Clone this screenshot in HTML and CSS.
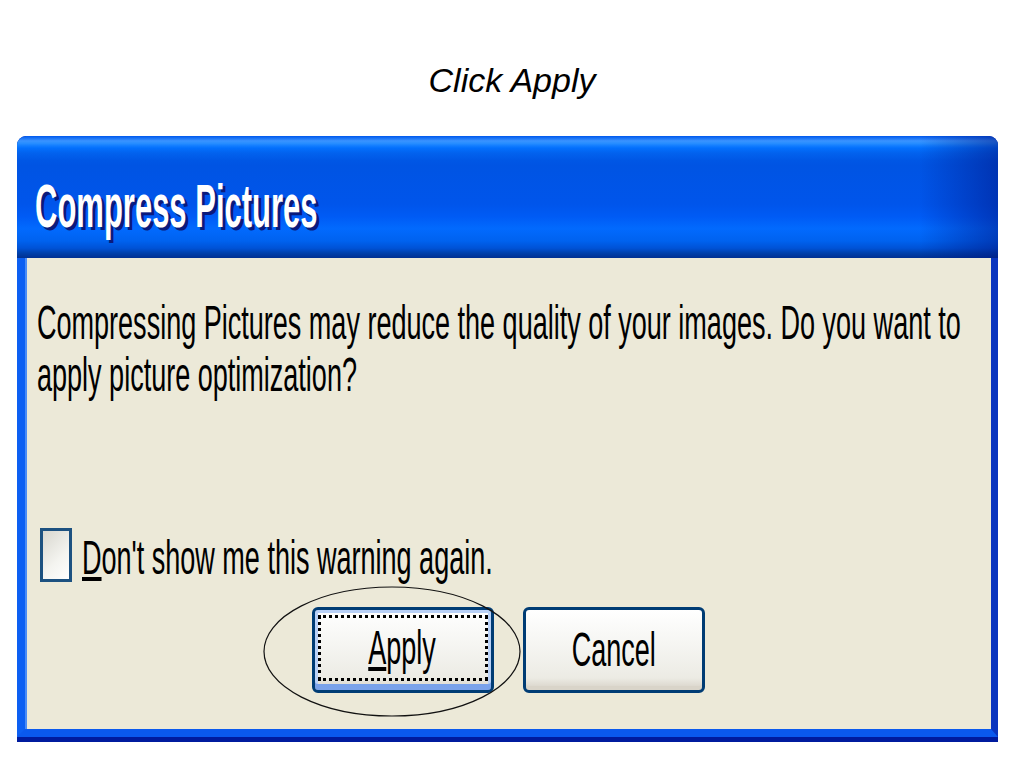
FILE: index.html
```html
<!DOCTYPE html>
<html lang="en">
<head>
    <meta charset="UTF-8">
    <meta name="viewport" content="width=device-width, initial-scale=1.0">
    <title>Click Apply</title>
    <link rel="stylesheet" href="styles.css">
</head>
<body>
    <h1 class="caption">Click Apply</h1>

    <div class="dialog">
        <div class="titlebar">
            <span class="title">Compress Pictures</span>
        </div>

        <div class="frame">
            <p class="message">
                <span class="line">Compressing Pictures may reduce the quality of your images. Do you want to</span>
                <span class="line">apply picture optimization?</span>
            </p>

            <label class="check">
                <span class="box"></span>
                <span class="check-text"><u>D</u>on't show me this warning again.</span>
            </label>

            <div class="buttons">
                <button class="btn btn-default">
                    <span class="focus"><span class="btn-text"><u>A</u>pply</span></span>
                </button>
                <button class="btn">
                    <span class="btn-text">Cancel</span>
                </button>
            </div>
        </div>

        <!-- hand-drawn circle around the Apply button -->
        <svg class="highlight" width="258" height="132" viewBox="0 0 258 132">
            <ellipse cx="129" cy="65.5" rx="128" ry="64.5" fill="none" stroke="#111" stroke-width="1.2"/>
        </svg>
    </div>
</body>
</html>
```

FILE: styles.css
```css
body {
    margin: 0;
    background: #fff;
    font-family: "Liberation Sans", Arial, sans-serif;
    overflow: hidden;
}
.caption {
    margin: 0;
    padding-top: 60px;
    height: 40px;
    line-height: 40px;
    font-size: 34px;
    font-weight: normal;
    font-style: italic;
    text-align: center;
    color: #000;
}
.dialog {
    position: relative;
    margin: 36px 0 0 17px;
    width: 981px;
    height: 601px;
    padding-bottom: 5px;
    display: flex;
    flex-direction: column;
    background: #001b9e;
    border-radius: 9px 9px 0 0;
}
.titlebar {
    height: 87px;
    padding: 35px 0 0 18px;
    border-radius: 9px 9px 0 0;
    background:
        linear-gradient(to right, rgba(0, 20, 120, 0) 92%, rgba(0, 20, 130, 0.5) 100%),
        linear-gradient(to bottom, #0058ee 0%, #3a93ff 4%, #288eff 6%, #127dff 8%, #036ffc 10%, #0262ee 14%, #0057e5 20%, #0054e3 24%, #0055eb 56%, #005bf5 66%, #026afe 76%, #0062ef 86%, #0052d6 92%, #0040ab 96%, #003092 100%);
}
.title {
    display: inline-block;
    font-size: 62px;
    line-height: 70px;
    font-weight: bold;
    color: #fff;
    white-space: nowrap;
    text-shadow: 6px 3px 0 #0a1a7c;
    transform: scaleX(0.5);
    transform-origin: left center;
}
.frame {
    flex: 1;
    display: flex;
    flex-direction: column;
    background: #ece9d8;
    border-left: 8px solid #0c5ff2;
    border-right: 7px solid #0a35be;
    border-bottom: 8px solid #0a59ee;
    box-shadow: inset 2px 0 0 #4a8cf6;
    overflow: hidden;
}
.message {
    margin: 39px 0 0 12px;
    font-size: 48px;
    line-height: 52px;
    color: #000;
}
.line {
    display: block;
    white-space: nowrap;
    transform: scaleX(0.563);
    transform-origin: left center;
}
.check {
    display: flex;
    align-items: flex-start;
    gap: 10px;
    margin: 127px 0 0 15px;
    height: 54px;
}
.box {
    box-sizing: border-box;
    width: 32px;
    height: 54px;
    border: 3px solid #1c5180;
    background: linear-gradient(135deg, #d8d7cf 0%, #f4f4f0 60%, #ffffff 100%);
}
.check-text {
    display: inline-block;
    padding-top: 3px;
    font-size: 48px;
    line-height: 54px;
    color: #000;
    white-space: nowrap;
    transform: scaleX(0.563);
    transform-origin: left center;
}
u {
    text-decoration-thickness: 4px;
    text-underline-offset: 3px;
}
.buttons {
    display: flex;
    justify-content: center;
    gap: 29px;
    margin-top: 25px;
}
.btn {
    box-sizing: border-box;
    width: 182px;
    height: 86px;
    padding: 0;
    display: flex;
    align-items: center;
    justify-content: center;
    border: 3px solid #003c74;
    border-radius: 6px;
    background: linear-gradient(to bottom, #ffffff 0%, #f6f6f3 40%, #ecebe4 85%, #d6d0c5 100%);
    box-shadow: inset 0 -4px 0 0 #d9d4c9;
    font-family: "Liberation Sans", Arial, sans-serif;
    color: #000;
}
.btn-default {
    padding: 5px 3px 9px 3px;
    align-items: stretch;
    box-shadow: inset 0 -6px 0 0 #7aa2ea, inset 0 0 0 3px #b9d1f7;
}
.focus {
    flex: 1;
    display: flex;
    align-items: center;
    justify-content: center;
    border: 3px dotted #000;
}
.btn-text {
    display: inline-block;
    font-size: 48px;
    line-height: 54px;
    white-space: nowrap;
    transform: scaleX(0.563);
    transform-origin: center;
}
.highlight {
    position: absolute;
    left: 246px;
    top: 450px;
}
```
